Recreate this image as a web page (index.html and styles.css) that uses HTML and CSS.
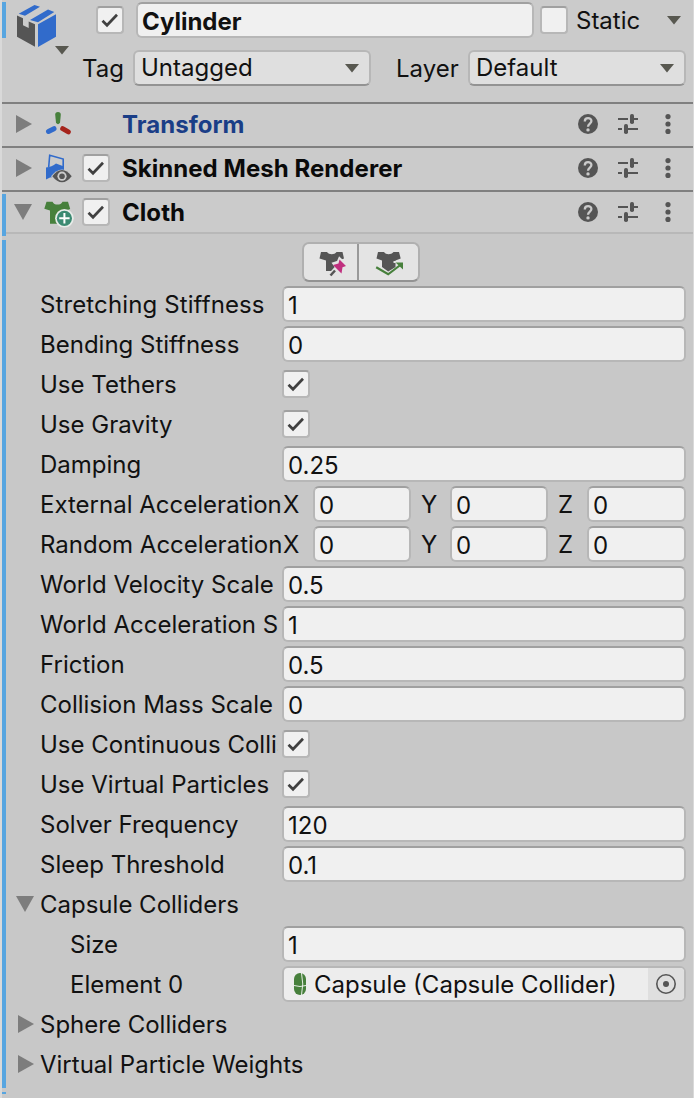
FILE: index.html
```html
<!DOCTYPE html>
<html lang="en">
<head>
<meta charset="utf-8">
<title>Inspector</title>
<link rel="stylesheet" href="styles.css">
</head>
<body>
<svg class="defs" aria-hidden="true">
  <symbol id="check" viewBox="0 0 24 24"><path d="M4.5 12.8 9 17.3 19 6.800" fill="none" stroke="#404040" stroke-width="2.7"/></symbol>
  <symbol id="down" viewBox="0 0 14 9"><path d="M0 0h14L7 8.5z" fill="#585850"/></symbol>
  <symbol id="fold" viewBox="0 0 16 18"><path d="M0 0 16 9 0 18z" fill="#7d7d7d"/></symbol>
  <symbol id="unfold" viewBox="0 0 18 16"><path d="M0 0h18L9 16z" fill="#7d7d7d"/></symbol>
  <symbol id="help" viewBox="0 0 20 20"><circle cx="10" cy="10" r="10" fill="#555"/><path d="M6.8 7.4C6.8 3 13.4 3.2 13.4 7.1 13.4 9.6 10 9.6 10 12.8" fill="none" stroke="#cbcbcb" stroke-width="2.3"/><circle cx="10" cy="15.9" r="1.7" fill="#cbcbcb"/></symbol>
  <symbol id="preset" viewBox="0 0 20 20"><path d="M0 5h10M14 5h6M0 15h4M8 15h12" stroke="#555" stroke-width="2"/><rect x="12" width="4" height="10" rx="1.8" fill="#555"/><rect x="6" y="10" width="4" height="10" rx="1.8" fill="#555"/></symbol>
  <symbol id="menu" viewBox="0 0 6 20"><g fill="#555"><circle cx="3" cy="2.6" r="2.6"/><circle cx="3" cy="10" r="2.6"/><circle cx="3" cy="17.4" r="2.6"/></g></symbol>
</svg>
<main class="inspector">
  <header class="object">
    <i class="mark mark-object"></i>
    <div class="object-icon">
      <svg class="cube" viewBox="0 0 40 42"><path d="M1.700 8.800 17.500 0 23 1.700 8 10.700zM13 15 31 4.600 37.300 7 21 17.300zM21 19.300 39 9.300V31.700L21 42z" fill="#316bcb"/><path d="M0 10.500 6 13.200V20.300L11.700 23V16.500L18 19.200V41.700L0 31.700z" fill="#555"/></svg>
      <svg class="caret"><use href="#down"/></svg>
    </div>
    <div class="object-fields">
      <div class="name-row">
        <span class="toggle"><svg><use href="#check"/></svg></span>
        <span class="field name">Cylinder</span>
        <span class="toggle"></span>
        <span class="static">Static</span>
        <svg class="caret"><use href="#down"/></svg>
      </div>
      <div class="tag-row">
        <span class="tag">Tag</span>
        <span class="select tag-select">Untagged<svg class="caret"><use href="#down"/></svg></span>
        <span class="layer">Layer</span>
        <span class="select layer-select">Default<svg class="caret"><use href="#down"/></svg></span>
      </div>
    </div>
  </header>

  <section class="component">
    <svg class="foldout"><use href="#fold"/></svg>
    <svg class="type-icon" viewBox="0 0 32 32"><path d="M12.200 6.800Q12.200 4 15 4t2.800 2.800L17 14.800Q15 17.500 13 14.800z" fill="#47803c"/><path d="m5.500 23.500 5.500-2.800" stroke="#316bcb" stroke-width="5" stroke-linecap="round"/><path d="m19.700 20.700 5.600 3.200" stroke="#a6241c" stroke-width="5" stroke-linecap="round"/></svg>
    <span class="gap"></span>
    <h2 class="title linked">Transform</h2>
    <div class="actions"><svg><use href="#help"/></svg><svg><use href="#preset"/></svg><svg class="dots"><use href="#menu"/></svg></div>
  </section>
  <section class="component">
    <svg class="foldout"><use href="#fold"/></svg>
    <svg class="type-icon" viewBox="0 0 32 32"><path d="M5.700 15 6.700 3.200 20.200 7v9" fill="none" stroke="#316bcb" stroke-width="1.600"/><path d="M3 15.500Q9 15 13 11.500L21 14.500V25H10.500L7 25.500 3 27.500z" fill="#316bcb"/><path d="M8 24.200Q19 11 30 24.200 19 37 8 24.200z" fill="#cbcbcb"/><path d="M9.300 24.200Q19 12 28.700 24.200 19 36.400 9.300 24.200z" fill="#555"/><circle cx="19" cy="24.200" r="4.600" fill="#cbcbcb"/><circle cx="19" cy="24.200" r="2.800" fill="#555"/></svg>
    <span class="toggle"><svg><use href="#check"/></svg></span>
    <h2 class="title">Skinned Mesh Renderer</h2>
    <div class="actions"><svg><use href="#help"/></svg><svg><use href="#preset"/></svg><svg class="dots"><use href="#menu"/></svg></div>
  </section>
  <section class="component open">
    <i class="mark mark-component"></i>
    <svg class="foldout"><use href="#unfold"/></svg>
    <svg class="type-icon" viewBox="0 0 32 32"><path d="M3.500 5.700H9.500C11 9.500 18 9.500 19.500 5.700H25L27.200 13 22 15V27.700H7V14.500L1.300 12.800z" fill="#47803c"/><circle cx="21.400" cy="22.300" r="9.300" fill="#e8ece9"/><circle cx="21.400" cy="22.300" r="7.600" fill="#3b8a72"/><path d="M16.200 22.300h10.400M21.400 17.100v10.400" stroke="#fff" stroke-width="2"/></svg>
    <span class="toggle"><svg><use href="#check"/></svg></span>
    <h2 class="title">Cloth</h2>
    <div class="actions"><svg><use href="#help"/></svg><svg><use href="#preset"/></svg><svg class="dots"><use href="#menu"/></svg></div>
  </section>

  <section class="body">
    <i class="mark mark-body"></i>
    <i class="mark mark-end"></i>
    <div class="tools">
      <span class="tool"><svg viewBox="0 0 32 28"><path d="M6 4h6c2 3 7.500 3 9.500 0h6L29 10.500 24 12.500V23H11V12.500L4.500 10.500z" fill="#555"/><path d="M14.500 28.500 24 18" stroke="#e4e4e4" stroke-width="5"/><path d="M18.500 15.500 23 14 24.500 10.500 33 18.500 28.500 20 27 27z" fill="#e4e4e4" stroke="#e4e4e4" stroke-width="2.500"/><path d="m15.500 27.500 4.500-5" stroke="#555" stroke-width="2.500"/><path d="M18 17 23.500 15.500 24.500 11.500 31 18 27.500 19.200 26.500 25.500z" fill="#c0307f"/></svg></span>
      <span class="tool"><svg viewBox="0 0 32 28"><path d="M5 4h6c2 3 7 3 9.500 0H26l1.700 6.500L22.500 12.500V19L15.200 23.500 9 19V12.500L3.500 10.500z" fill="#555"/><path d="M20.500 14H32v9" fill="none" stroke="#e4e4e4" stroke-width="2"/><path d="m3.200 19.300 12 7L28 16.500" fill="none" stroke="#47803c" stroke-width="2.200"/><path d="M22.500 14.500H30V21.500z" fill="#47803c"/></svg></span>
    </div>
    <div class="row"><label class="wide">Stretching Stiffness</label><span class="field">1</span></div>
    <div class="row"><label>Bending Stiffness</label><span class="field">0</span></div>
    <div class="row"><label>Use Tethers</label><span class="toggle"><svg><use href="#check"/></svg></span></div>
    <div class="row"><label>Use Gravity</label><span class="toggle"><svg><use href="#check"/></svg></span></div>
    <div class="row"><label>Damping</label><span class="field">0.25</span></div>
    <div class="row"><label>External Acceleration</label><div class="vector"><b>X</b><span class="field">0</span><b>Y</b><span class="field">0</span><b>Z</b><span class="field">0</span></div></div>
    <div class="row"><label>Random Acceleration</label><div class="vector"><b>X</b><span class="field">0</span><b>Y</b><span class="field">0</span><b>Z</b><span class="field">0</span></div></div>
    <div class="row"><label>World Velocity Scale</label><span class="field">0.5</span></div>
    <div class="row"><label>World Acceleration S</label><span class="field">1</span></div>
    <div class="row"><label>Friction</label><span class="field">0.5</span></div>
    <div class="row"><label>Collision Mass Scale</label><span class="field">0</span></div>
    <div class="row"><label class="clip">Use Continuous Collision</label><span class="toggle"><svg><use href="#check"/></svg></span></div>
    <div class="row"><label>Use Virtual Particles</label><span class="toggle"><svg><use href="#check"/></svg></span></div>
    <div class="row"><label>Solver Frequency</label><span class="field">120</span></div>
    <div class="row"><label>Sleep Threshold</label><span class="field">0.1</span></div>
    <div class="row group"><svg class="foldout"><use href="#unfold"/></svg><label>Capsule Colliders</label></div>
    <div class="row nested"><label>Size</label><span class="field">1</span></div>
    <div class="row nested"><label>Element 0</label>
      <span class="object-field"><svg class="capsule" viewBox="0 0 12 22"><rect width="12" height="22" rx="6" fill="#47803c"/><path d="M0 12.500Q6 14.500 12 12.500M7.500 0Q10 11 7.500 22" fill="none" stroke="#e8eee6" stroke-width="1"/></svg><span class="object-name">Capsule (Capsule Collider)</span><span class="picker"><svg viewBox="0 0 20 20"><circle cx="10" cy="10" r="9.200" fill="none" stroke="#555" stroke-width="1.600"/><circle cx="10" cy="10" r="3" fill="#555"/></svg></span></span>
    </div>
    <div class="row group"><svg class="foldout closed"><use href="#fold"/></svg><label>Sphere Colliders</label></div>
    <div class="row group"><svg class="foldout closed"><use href="#fold"/></svg><label>Virtual Particle Weights</label></div>
  </section>
</main>
</body>
</html>
```
FILE: styles.css
```css
* { box-sizing: border-box; }
body { margin: 0; background: #d9d9d9; color: #111; font: 24px/36px Inter, sans-serif; }
svg { display: block; flex: none; overflow: visible; }
.defs { position: absolute; width: 0; height: 0; }
.inspector { width: 691px; height: 1098px; margin-left: 2px; background: #c8c8c8; overflow: hidden; }
.mark { position: absolute; left: 0; width: 4px; background: #57a5e0; }
.mark-object { top: 2px; height: 36px; }
.mark-component { top: 2px; height: 42px; }
.mark-body { top: 6px; height: 848px; }
.mark-end { top: 858px; height: 2px; }

.field, .select, .object-field { height: 36px; border: 2px solid #b7b7b7; border-radius: 6px; line-height: 35px; }
.field { flex: 1; min-width: 0; padding-left: 4px; background: #f0f0f0; border-top-color: #a0a0a0; }
.toggle { flex: none; width: 28px; height: 28px; border: 2px solid #b7b7b7; border-top-color: #a0a0a0; border-radius: 4px; background: #f0f0f0; }
.toggle svg { width: 24px; height: 24px; }
.caret { width: 14px; height: 9px; }

.object { position: relative; display: flex; height: 102px; background: #cbcbcb; }
.object-icon { width: 94px; padding: 5px 0 0 15px; }
.cube { width: 40px; height: 42px; }
.object-icon .caret { margin: -1px 0 0 38px; }
.object-fields { flex: 1; padding-top: 2px; }
.name-row, .tag-row { display: flex; align-items: center; height: 36px; }
.name { flex: 0 0 398px; margin: 0 6px 0 12px; font-weight: 700; }
.static { width: 99px; padding: 1px 0 0 8px; }
.tag-row { margin-top: 12px; }
.tag-row .tag { width: 51px; margin-left: -14px; padding-top: 1px; }
.select { display: flex; align-items: center; justify-content: space-between; padding: 0 10px 0 6px; background: #dfdfdf; border-bottom-color: #939393; line-height: 32px; }
.tag-select { width: 238px; }
.layer { width: 97px; padding: 1px 0 0 25px; }
.layer-select { width: 218px; }

.component { position: relative; display: flex; align-items: center; height: 44px; padding: 0 19px 2px 13px; border-top: 2px solid #808080; background: #cbcbcb; }
.component.open { padding-bottom: 0; border-bottom: 2px solid #b8b8b8; }
.component .foldout { width: 18px; height: 18px; margin-right: 10px; }
.component.open .foldout { height: 16px; margin-left: -1px; margin-right: 11px; }
.type-icon { width: 32px; height: 32px; margin-right: 7px; }
.gap { width: 28px; }
.title { flex: 1; margin: 0 0 0 12px; padding-top: 1px; font-size: 24px; font-weight: 700; letter-spacing: 0.05px; color: #0a0a0a; }
.linked { color: #1a3e87; }
.actions { display: flex; gap: 20px; }
.actions svg { width: 20px; height: 20px; }
.actions .dots { width: 6px; margin-left: 7px; margin-right: 3px; }

.body { position: relative; padding: 8px 7px 0 38px; }
.tools { display: flex; width: 118px; height: 40px; margin: 0 0 4px 262px; border: 2px solid #b0b0b0; border-bottom-color: #939393; border-radius: 7px; background: #e4e4e4; }
.tool { flex: 0 0 53px; display: flex; align-items: center; justify-content: center; }
.tool + .tool { flex: 1; border-left: 2px solid #999; }
.tool svg { width: 32px; height: 28px; }
.row { display: flex; align-items: center; height: 36px; margin-bottom: 4px; }
.row label { flex: none; width: 242px; padding-top: 1px; white-space: nowrap; }
.row .wide { letter-spacing: 0.12px; }
.row .clip { width: 238px; margin-right: 4px; overflow: hidden; }
.vector { flex: 1; display: grid; grid-template-columns: 31px 98px 39px 98px 39px 99px; }
.vector b { font-weight: 400; padding: 1px 0 0 10px; }
.vector b:first-child { padding-left: 1px; }
.nested label { padding-left: 30px; }
.group { margin-left: -24px; }
.group .foldout { width: 18px; height: 16px; margin-right: 6px; }
.group .closed { height: 18px; margin-left: 1px; margin-right: 5px; }
.object-field { flex: 1; display: flex; align-items: center; padding-left: 10px; background: #ededed; overflow: hidden; }
.capsule { width: 12px; height: 22px; margin-right: 8px; }
.object-name { flex: 1; white-space: nowrap; }
.picker { display: flex; align-items: center; justify-content: center; width: 36px; height: 32px; background: #dfdfdf; }
.picker svg { width: 20px; height: 20px; }
```
